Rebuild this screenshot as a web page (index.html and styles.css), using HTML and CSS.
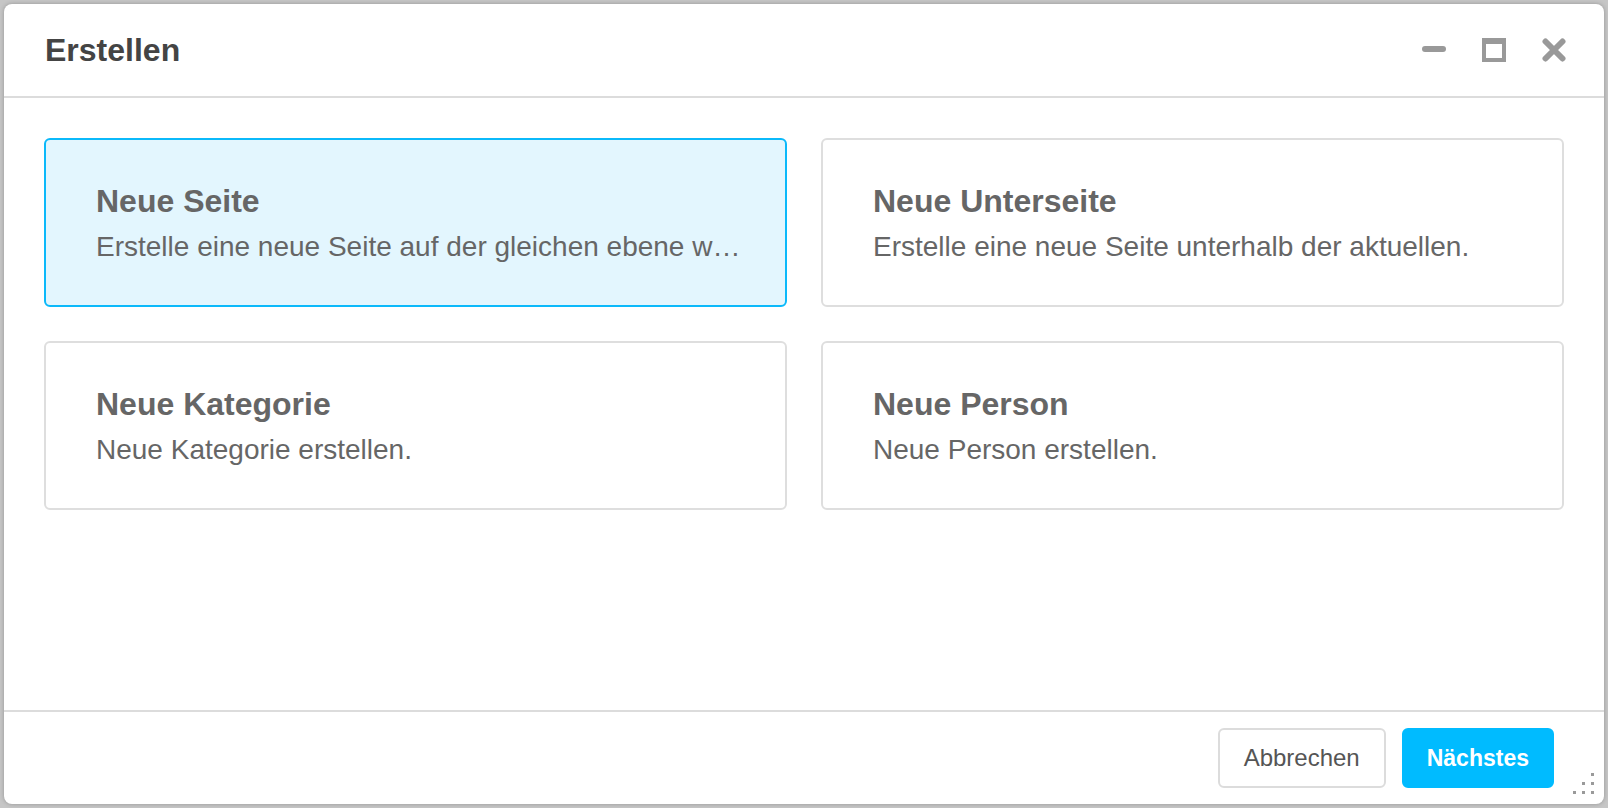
FILE: index.html
```html
<!DOCTYPE html>
<html lang="de">
<head>
<meta charset="utf-8">
<title>Erstellen</title>
<link rel="stylesheet" href="styles.css">
</head>
<body>
<div class="window">
  <header class="header">
    <h1 class="title">Erstellen</h1>
    <div class="controls">
      <svg class="ctl" viewBox="0 0 24 24" width="24" height="24"><rect x="0" y="8" width="24" height="6" rx="3" fill="#999"/></svg>
      <svg class="ctl" viewBox="0 0 24 24" width="24" height="24"><path d="M0 0H24V24H0Z M4 6V20H20V6Z" fill="#999" fill-rule="evenodd"/></svg>
      <svg class="ctl" viewBox="0 0 24 24" width="24" height="24"><path d="M3.5 3.5L20.5 20.5M20.5 3.5L3.5 20.5" stroke="#999" stroke-width="6" stroke-linecap="round"/></svg>
    </div>
  </header>
  <main class="content">
    <div class="grid">
      <div class="card selected">
        <div class="card-title">Neue Seite</div>
        <div class="card-desc">Erstelle eine neue Seite auf der gleichen ebene w…</div>
      </div>
      <div class="card">
        <div class="card-title">Neue Unterseite</div>
        <div class="card-desc">Erstelle eine neue Seite unterhalb der aktuellen.</div>
      </div>
      <div class="card">
        <div class="card-title">Neue Kategorie</div>
        <div class="card-desc">Neue Kategorie erstellen.</div>
      </div>
      <div class="card">
        <div class="card-title">Neue Person</div>
        <div class="card-desc">Neue Person erstellen.</div>
      </div>
    </div>
  </main>
  <footer class="footer">
    <button class="btn">Abbrechen</button>
    <button class="btn primary">Nächstes</button>
  </footer>
  <svg class="grip" viewBox="0 0 24 24" width="24" height="24">
    <rect x="19" y="1" width="3" height="3" fill="#9a9a9a"/>
    <rect x="10" y="10" width="3" height="3" fill="#9a9a9a"/>
    <rect x="19" y="10" width="3" height="3" fill="#9a9a9a"/>
    <rect x="1" y="19" width="3" height="3" fill="#9a9a9a"/>
    <rect x="10" y="19" width="3" height="3" fill="#9a9a9a"/>
    <rect x="19" y="19" width="3" height="3" fill="#9a9a9a"/>
  </svg>
</div>
</body>
</html>
```
FILE: styles.css
```css
html, body {
  margin: 0;
  padding: 0;
}
body {
  background: #c6c6c6;
  font-family: "Liberation Sans", Arial, Helvetica, sans-serif;
  width: 1608px;
  height: 808px;
  overflow: hidden;
}
.window {
  position: relative;
  margin: 4px;
  width: 1600px;
  height: 800px;
  background: #fff;
  border-radius: 8px;
  box-shadow: 0 0 4px rgba(0, 0, 0, 0.25);
  display: flex;
  flex-direction: column;
  overflow: hidden;
}
.header {
  height: 92px;
  flex: none;
  display: flex;
  align-items: center;
  justify-content: space-between;
  padding: 0 38px 0 41px;
  border-bottom: 2px solid #dcdcdc;
}
.title {
  margin: 0;
  font-size: 32px;
  line-height: 36px;
  font-weight: bold;
  color: #444;
}
.controls {
  display: flex;
  gap: 36px;
  align-items: center;
}
.ctl {
  display: block;
}
.content {
  flex: 1;
  padding: 40px;
}
.grid {
  display: grid;
  grid-template-columns: 1fr 1fr;
  gap: 34px;
}
.card {
  border: 2px solid #dedede;
  border-radius: 6px;
  padding: 43px 42px 42px 50px;
  color: #666;
  min-width: 0;
}
.card.selected {
  background: #e3f6fe;
  border-color: #0bb9fa;
}
.card-title {
  font-size: 32px;
  line-height: 36px;
  font-weight: bold;
  margin-bottom: 12px;
}
.card-desc {
  font-size: 28px;
  line-height: 32px;
  white-space: nowrap;
  overflow: hidden;
  text-overflow: ellipsis;
}
.footer {
  height: 92px;
  flex: none;
  border-top: 2px solid #dcdcdc;
  display: flex;
  align-items: center;
  justify-content: flex-end;
  gap: 16px;
  padding: 0 50px 0 40px;
}
.btn {
  height: 60px;
  padding: 0 24px;
  border: 2px solid #dcdcdc;
  border-radius: 6px;
  background: #fff;
  color: #555;
  font-family: "Liberation Sans", Arial, Helvetica, sans-serif;
  font-size: 24px;
}
.btn.primary {
  background: #00bbff;
  border-color: #00bbff;
  color: #fff;
  font-weight: bold;
  font-size: 23px;
  padding: 0 23px;
}
.grip {
  position: absolute;
  right: 8px;
  bottom: 8px;
}
```
